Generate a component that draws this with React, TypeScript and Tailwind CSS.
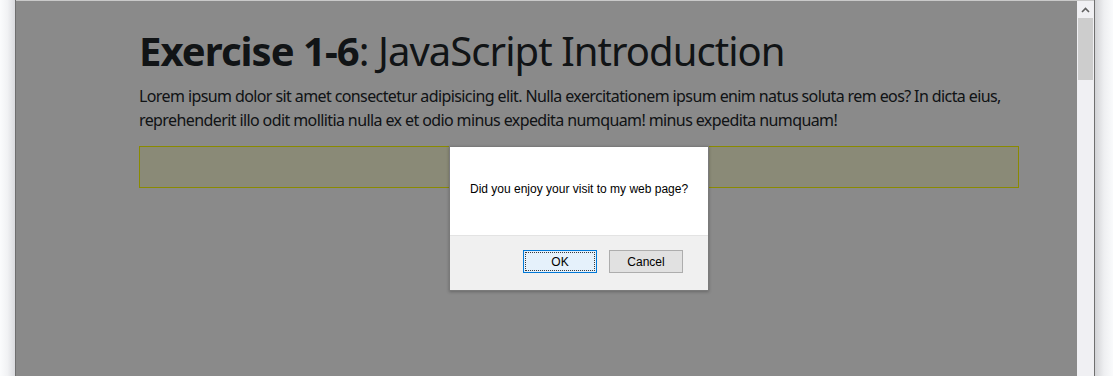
export default function App() {
  return (
    <div className="flex h-[376px] w-[1113px] overflow-hidden bg-[#f8f9fb]">
      {/* left window shadow */}
      <div className="w-[15px] shrink-0 bg-gradient-to-r from-[#fbfcfd] via-[#f1f2f4] to-[#d9dade]" />

      {/* browser window */}
      <div className="flex w-[1080px] shrink-0 border-l border-r border-[#6f6f6f]">
        <div className="relative min-w-0 flex-1 overflow-hidden border-t border-[#c9c9c9] bg-white">
          <div className="px-[123px] pt-[26px]" style={{ fontFamily: '"Noto Sans", "Open Sans", sans-serif' }}>
            <h1 className="whitespace-nowrap text-[40px] leading-[48px] tracking-[-0.95px] text-[#212529]">
              <span className="font-bold">Exercise 1-6</span>: JavaScript Introduction
            </h1>
            <p className="mt-[9px] whitespace-nowrap text-[16px] leading-[24px] tracking-[-0.6px] text-[#212529]">
              Lorem ipsum dolor sit amet consectetur adipisicing elit. Nulla exercitationem ipsum enim natus soluta rem eos? In dicta eius,
              <br />
              reprehenderit illo odit mollitia nulla ex et odio minus expedita numquam! minus expedita numquam!
            </p>
            <div className="mt-[14px] h-[42px] w-[880px] border border-[#ffff00] bg-[#ffffdd]" />
          </div>

          {/* modal overlay */}
          <div className="absolute inset-0 bg-black/[0.46]" />

          {/* alert dialog */}
          <div
            className="absolute left-[433px] top-[145px] w-[260px] border border-[#7a7a7a] bg-white shadow-[0_1px_3px_rgba(0,0,0,0.25)]"
            style={{ fontFamily: '"Liberation Sans", Arial, sans-serif' }}
          >
            <div className="flex h-[88px] items-center pb-[4px] pl-[20px] text-[12px] text-black">
              Did you enjoy your visit to my web page?
            </div>
            <div className="flex h-[55px] items-start justify-end gap-[12px] border-t border-[#e3e3e3] bg-[#f0f0f0] pr-[25px] pt-[14px]">
              <button className="h-[23px] w-[74px] border border-[#0078d7] bg-[#e5f1fb] text-[12px] text-black outline-1 outline-dotted -outline-offset-3 outline-[#3a3a3a]">
                OK
              </button>
              <button className="h-[23px] w-[74px] border border-[#adadad] bg-[#e1e1e1] text-[12px] text-black">
                Cancel
              </button>
            </div>
          </div>
        </div>

        {/* scrollbar */}
        <div className="flex w-[17px] shrink-0 flex-col border-t border-[#c9c9c9] bg-[#f0f0f3]">
          <div className="flex h-[17px] items-center justify-center">
            <svg width="9" height="6" viewBox="0 0 9 6">
              <path d="M1 5 L4.5 1.5 L8 5" fill="none" stroke="#606060" strokeWidth="1.6" />
            </svg>
          </div>
          <div className="mx-[1px] h-[62px] bg-[#cdcdcd]" />
        </div>
      </div>

      {/* right window shadow */}
      <div className="flex-1 bg-gradient-to-r from-[#d2d3d6] via-[#eeeff1] to-[#fafbfc]" />
    </div>
  );
}
